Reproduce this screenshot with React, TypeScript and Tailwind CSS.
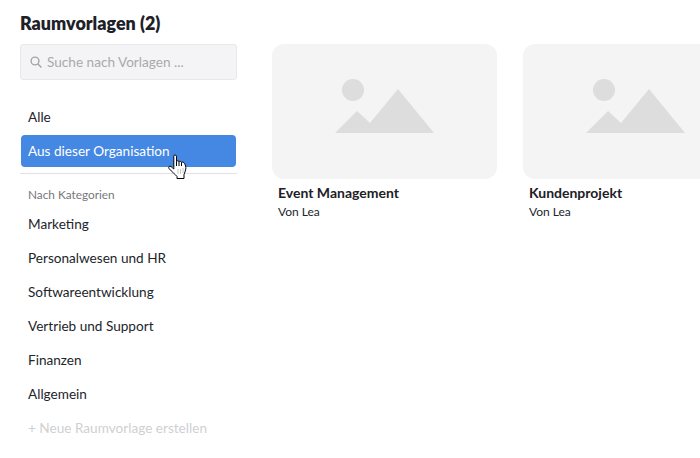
const categories = [
  "Marketing",
  "Personalwesen und HR",
  "Softwareentwicklung",
  "Vertrieb und Support",
  "Finanzen",
  "Allgemein",
];

const templates = [
  { name: "Event Management", owner: "Von Lea" },
  { name: "Kundenprojekt", owner: "Von Lea" },
];

function Placeholder() {
  return (
    <svg width="100" height="55" viewBox="0 0 100 55" className="block mb-[11px]">
      <circle cx="18" cy="11" r="11" fill="#dedddd" />
      <path d="M0 54 L22 32 L35 44 L63 10 L99 54 Z" fill="#dedddd" />
    </svg>
  );
}

function HandCursor() {
  return (
    <svg
      width="19"
      height="26"
      viewBox="0 0 19 26"
      className="absolute left-[148px] top-[19px]"
    >
      <path
        d="M5.8 2.2 C5.8 0.6 8.5 0.6 8.5 2.2 L8.5 7.5 C9 6.5 10.8 6.5 11 7.8 C11.6 7 13.3 7.2 13.5 8.5 C14.2 7.8 16 8 16.5 9.5 C17.5 11 18 13 17.8 15 C17.6 17 16.5 19 16 20.5 L16 24.5 L9 24.5 L9 22.5 C7 20 4 18 1 14.5 C0 13 1.5 11.5 3 12.5 L5.8 15 Z"
        fill="#ffffff"
        stroke="#000000"
        strokeWidth="1"
        strokeLinejoin="round"
      />
      <path d="M8.5 7.5 V12 M11 7.8 V12 M13.5 8.5 V12" stroke="#000000" strokeWidth="1" />
      <path d="M10 15 V20 M12.5 15 V20 M15 14 V19" stroke="#c8c8c8" strokeWidth="1" />
    </svg>
  );
}

export default function App() {
  return (
    <div className="w-[700px] h-[458px] overflow-hidden bg-white flex gap-[35px] pl-5 font-['Lato','Noto_Sans',sans-serif] text-[13.6px] text-[#22252b]">
      <aside className="w-[217px] shrink-0 flex flex-col">
        <h1 className="h-11 pt-[11px] text-[17.9px] leading-[24px] font-extrabold text-[#1d2026]">
          Raumvorlagen (2)
        </h1>

        <div className="h-9 flex items-center gap-[5px] pl-[9px] bg-[#f4f4f6] border border-[#e8e8ea] rounded-[3px] text-[#a9a9ab]">
          <svg width="12" height="12" viewBox="0 0 12 12" fill="none" stroke="#a3a3a5" strokeWidth="1.4">
            <circle cx="5" cy="5" r="3.9" />
            <path d="M8 8 L11.4 11.4" />
          </svg>
          <span className="pt-px">Suche nach Vorlagen ...</span>
        </div>

        <div className="mt-[19px] h-9 flex items-center px-2">Alle</div>

        <div className="relative">
          <div className="mx-px h-8 flex items-center pl-[7px] rounded-[4px] bg-[#4488e4] text-white">
            Aus dieser Organisation
          </div>
          <HandCursor />
        </div>

        <div className="mt-[6px] border-t border-[#e2e2e2]" />

        <div className="mt-[11px] h-[20px] flex items-center px-2 text-[11.8px] text-[#77777a]">
          Nach Kategorien
        </div>

        <ul className="mt-[2px]">
          {categories.map((c) => (
            <li key={c} className="h-[34px] flex items-center px-2">
              {c}
            </li>
          ))}
          <li className="h-[34px] flex items-center px-2 text-[#d0d0d2]">
            + Neue Raumvorlage erstellen
          </li>
        </ul>
      </aside>

      <main className="flex gap-[26px] pt-11">
        {templates.map((t) => (
          <div key={t.name} className="w-[225px] shrink-0">
            <div className="h-[135px] rounded-[12px] bg-[#f4f4f4] flex items-center justify-center">
              <Placeholder />
            </div>
            <div className="mt-[5px] px-[6px] text-[14px] leading-[18px] font-bold text-[#1d2026]">
              {t.name}
            </div>
            <div className="mt-px px-[6px] text-[12px] leading-[18px]">{t.owner}</div>
          </div>
        ))}
      </main>
    </div>
  );
}
